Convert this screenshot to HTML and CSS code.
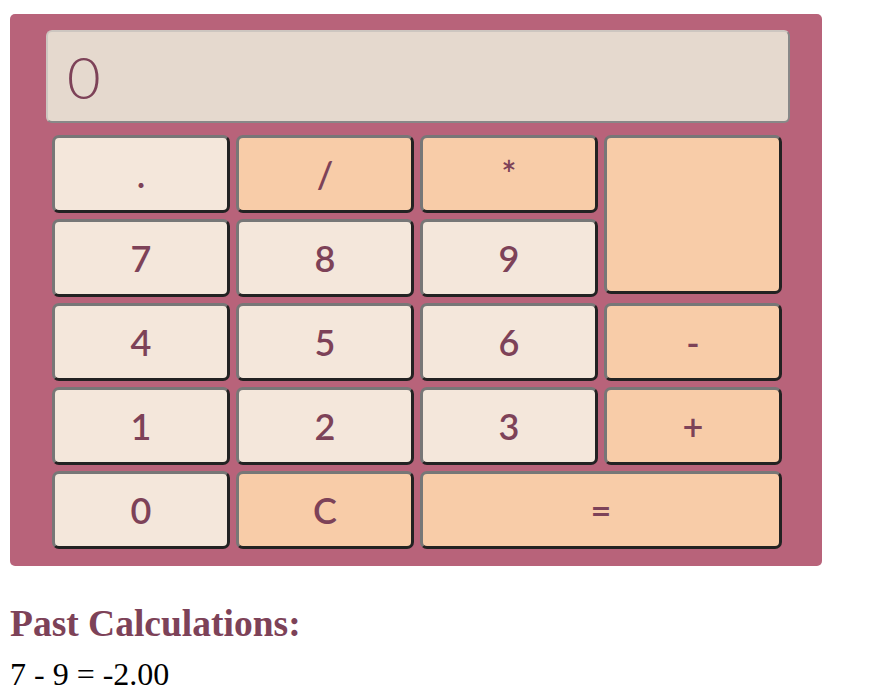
FILE: index.html
```html
<!DOCTYPE html>
<html>
<head>
<meta charset="utf-8">
<link rel="stylesheet" href="styles.css">
</head>
<body>
<div class="calc">
  <div class="display">0</div>
  <div class="keys">
    <button class="key light">.</button>
    <button class="key op">/</button>
    <button class="key op">*</button>
    <button class="key op tall"></button>
    <button class="key light">7</button>
    <button class="key light">8</button>
    <button class="key light">9</button>
    <button class="key light">4</button>
    <button class="key light">5</button>
    <button class="key light">6</button>
    <button class="key op">-</button>
    <button class="key light">1</button>
    <button class="key light">2</button>
    <button class="key light">3</button>
    <button class="key op">+</button>
    <button class="key light">0</button>
    <button class="key op">C</button>
    <button class="key op wide">=</button>
  </div>
</div>
<h2 class="history-title">Past Calculations:</h2>
<div class="history-item">7 - 9 = -2.00</div>
</body>
</html>
```

FILE: styles.css
```css
html, body {
  margin: 0;
  padding: 0;
  background: #ffffff;
}

body {
  font-family: "Liberation Serif", "Times New Roman", serif;
}

.calc {
  box-sizing: border-box;
  margin: 14px 0 0 10px;
  width: 812px;
  height: 552px;
  padding: 16px 0 17px 36px;
  background: #b8637a;
  border-radius: 5px;
}

.display {
  box-sizing: border-box;
  width: 744px;
  height: 93px;
  display: flex;
  align-items: center;
  padding-left: 19px;
  background: #e5d9ce;
  border: 2px solid;
  border-color: #cdc6c0 #888888 #888888 #cdc6c0;
  border-radius: 6px;
  font-family: "Lato", "Liberation Sans", sans-serif;
  font-weight: 300;
  font-size: 58px;
  color: #7d4258;
}

.keys {
  display: grid;
  grid-template-columns: repeat(4, 178px);
  grid-auto-rows: 78px;
  gap: 6px;
  margin: 12px 0 0 6px;
}

.key {
  box-sizing: border-box;
  margin: 0;
  padding: 0;
  border: 3px solid;
  border-color: #777777 #222222 #222222 #777777;
  border-radius: 7px;
  font-family: "Lato", "Liberation Sans", sans-serif;
  font-size: 36px;
  font-weight: 600;
  color: #7d4258;
  display: flex;
  align-items: center;
  justify-content: center;
  line-height: 1;
}

.light {
  background: #f4e7db;
}

.op {
  background: #f8cca8;
}

.tall {
  grid-column: 4;
  grid-row: 1 / span 2;
  height: 159px;
}

.wide {
  grid-column: 3 / span 2;
}

.history-title {
  margin: 38px 0 0 10px;
  font-size: 37.5px;
  line-height: 40px;
  font-weight: bold;
  color: #7d4258;
}

.history-item {
  margin: 13px 0 0 10px;
  font-size: 32px;
  line-height: 34px;
  color: #000000;
}
```
